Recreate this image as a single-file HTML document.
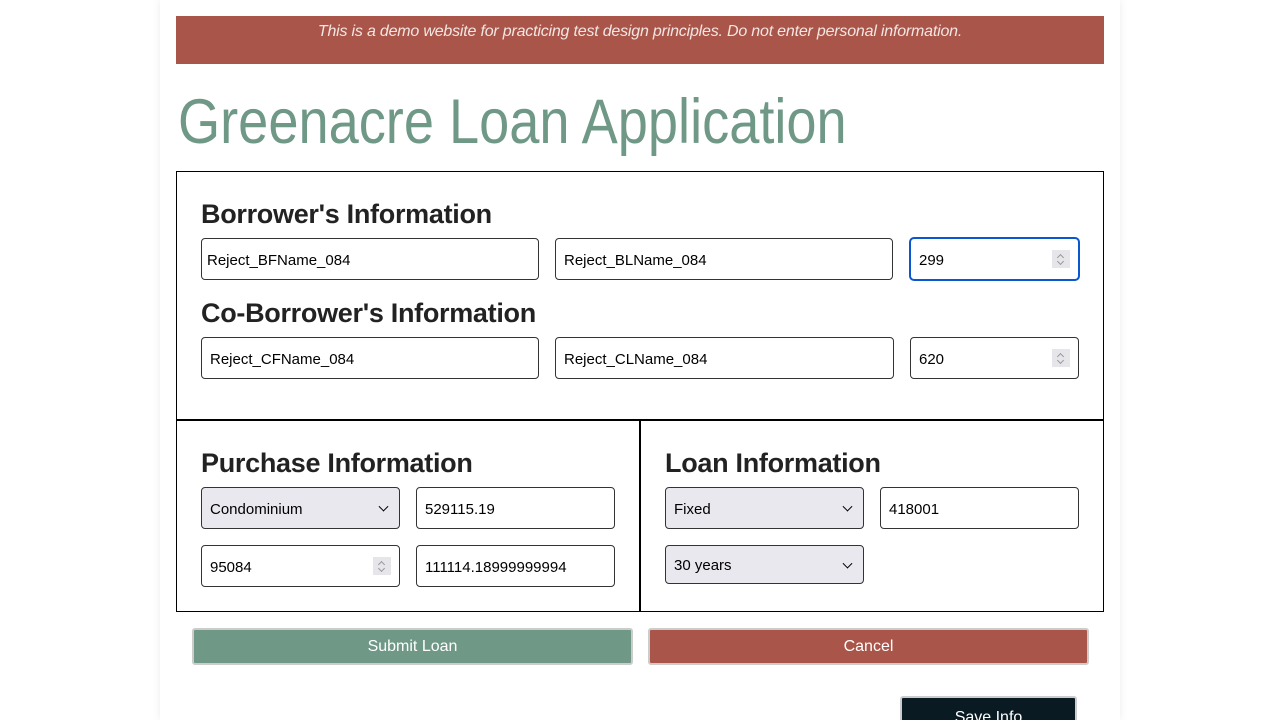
<!DOCTYPE html>
<html><head><style>
html,body{margin:0;background:#fff;font-family:"Liberation Sans",sans-serif;overflow:hidden;width:1280px;height:720px;position:relative}
.c{position:absolute;left:160px;top:0;width:960px;height:720px;background:#fff;box-shadow:0 0 8px rgba(0,0,0,.08);}
.a{position:absolute;box-sizing:border-box;}
.banner{left:176px;top:16px;width:928px;height:48px;background:#a9554a;color:#f3e6e3;font-style:italic;font-size:16px;text-align:center;padding-top:7px;letter-spacing:-0.2px}
.title{left:178px;top:86px;font-size:63px;color:#6f9887;white-space:nowrap;transform:scaleX(0.86);transform-origin:0 0}
.box{border:1.5px solid #000;}
h2{position:absolute;margin:0;font-size:27px;font-weight:bold;color:#222;white-space:nowrap;letter-spacing:-0.3px}
.in{border:1px solid #333;border-radius:4px;background:#fff;font-size:15px;color:#000;padding-left:8px;padding-top:2px;display:flex;align-items:center}
.sel{background:#e8e8ee}
.sel:after{content:"";position:absolute;right:12px;top:50%;width:6px;height:6px;border-right:1.5px solid #000;border-bottom:1.5px solid #000;transform:translateY(-70%) rotate(45deg)}
.spin{position:absolute;right:8px;top:11px;width:18px;height:18px;background:#e6e6ea}
.spin:before,.spin:after{content:"";position:absolute;left:6px;width:4px;height:4px;border-left:1px solid #999;border-top:1px solid #999}
.spin:before{top:5px;transform:rotate(45deg)}
.spin:after{top:9px;transform:rotate(-135deg)}
.btn{color:#fff;font-size:16px;text-align:center;line-height:33px;border:2px solid #ccc;border-radius:3px}
</style></head><body>
<div class="c"></div>
<div class="a banner">This is a demo website for practicing test design principles. Do not enter personal information.</div>
<div class="a title">Greenacre Loan Application</div>
<div class="a box" style="left:176px;top:171px;width:928px;height:250px"></div>
<div class="a box" style="left:176px;top:419px;width:465px;height:193px"></div>
<div class="a box" style="left:639px;top:419px;width:465px;height:193px"></div>
<h2 style="left:201px;top:199px">Borrower's Information</h2>
<div class="a in" style="left:201px;top:238px;width:338px;height:42px;padding-left:5px">Reject_BFName_084</div>
<div class="a in" style="left:555px;top:238px;width:338px;height:42px">Reject_BLName_084</div>
<div class="a in" style="left:909px;top:237px;width:171px;height:44px;border:2.5px solid #0b57d0;border-radius:5px">299<div class="spin"></div></div>
<h2 style="left:201px;top:298px">Co-Borrower's Information</h2>
<div class="a in" style="left:201px;top:337px;width:338px;height:42px">Reject_CFName_084</div>
<div class="a in" style="left:555px;top:337px;width:339px;height:42px">Reject_CLName_084</div>
<div class="a in" style="left:910px;top:337px;width:169px;height:42px">620<div class="spin"></div></div>
<h2 style="left:201px;top:448px">Purchase Information</h2>
<div class="a in sel" style="left:201px;top:487px;width:199px;height:42px">Condominium</div>
<div class="a in" style="left:416px;top:487px;width:199px;height:42px">529115.19</div>
<div class="a in" style="left:201px;top:545px;width:199px;height:42px">95084<div class="spin"></div></div>
<div class="a in" style="left:416px;top:545px;width:199px;height:42px">111114.18999999994</div>
<h2 style="left:665px;top:448px">Loan Information</h2>
<div class="a in sel" style="left:665px;top:487px;width:199px;height:42px">Fixed</div>
<div class="a in" style="left:880px;top:487px;width:199px;height:42px">418001</div>
<div class="a in sel" style="left:665px;top:545px;width:199px;height:39px">30 years</div>
<div class="a btn" style="left:192px;top:628px;width:441px;height:37px;background:#6f9887">Submit Loan</div>
<div class="a btn" style="left:648px;top:628px;width:441px;height:37px;background:#a9554a">Cancel</div>
<div class="a btn" style="left:900px;top:696px;width:177px;height:40px;background:#0a1a22;line-height:40px">Save Info</div>
</body></html>
